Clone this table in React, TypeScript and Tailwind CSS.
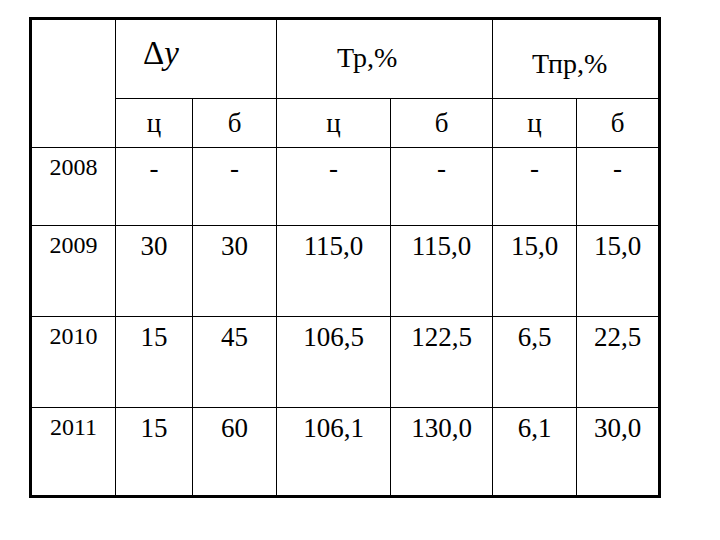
import React from "react";

const rows: { year: string; vals: string[] }[] = [
  { year: "2008", vals: ["-", "-", "-", "-", "-", "-"] },
  { year: "2009", vals: ["30", "30", "115,0", "115,0", "15,0", "15,0"] },
  { year: "2010", vals: ["15", "45", "106,5", "122,5", "6,5", "22,5"] },
  { year: "2011", vals: ["15", "60", "106,1", "130,0", "6,1", "30,0"] },
];

export default function App() {
  return (
    <div className="w-[720px] h-[540px] bg-white text-black font-['Liberation_Serif','Times_New_Roman',serif]">
      <div className="pt-[17px] pl-[29px]">
        <div className="grid w-fit grid-cols-[83px_76px_83px_113px_101px_83px_81px] grid-rows-[78px_48px_77px_90px_90px_87px] gap-px bg-black border-[3px] border-black">
          <div className="row-span-2 bg-white" />
          <div className="col-span-2 bg-white pl-[27px] pt-[17px] text-[33px] leading-none">
            Δ<span className="italic">y</span>
          </div>
          <div className="col-span-2 bg-white pl-[60px] pt-[24px] text-[28px] leading-none">
            Тр,%
          </div>
          <div className="col-span-2 bg-white pl-[39px] pt-[30px] text-[28px] leading-none">
            Тпр,%
          </div>
          {["ц", "б", "ц", "б", "ц", "б"].map((t, i) => (
            <div key={i} className="bg-white text-center pt-[11px] text-[27px] leading-none">
              {t}
            </div>
          ))}
          {rows.map((r) => (
            <React.Fragment key={r.year}>
              <div className="bg-white text-center pt-[7px] text-[24px] leading-none">{r.year}</div>
              {r.vals.map((v, i) => (
                <div key={i} className="bg-white text-center pt-[7px] text-[27px] leading-none">
                  {v}
                </div>
              ))}
            </React.Fragment>
          ))}
        </div>
      </div>
    </div>
  );
}
